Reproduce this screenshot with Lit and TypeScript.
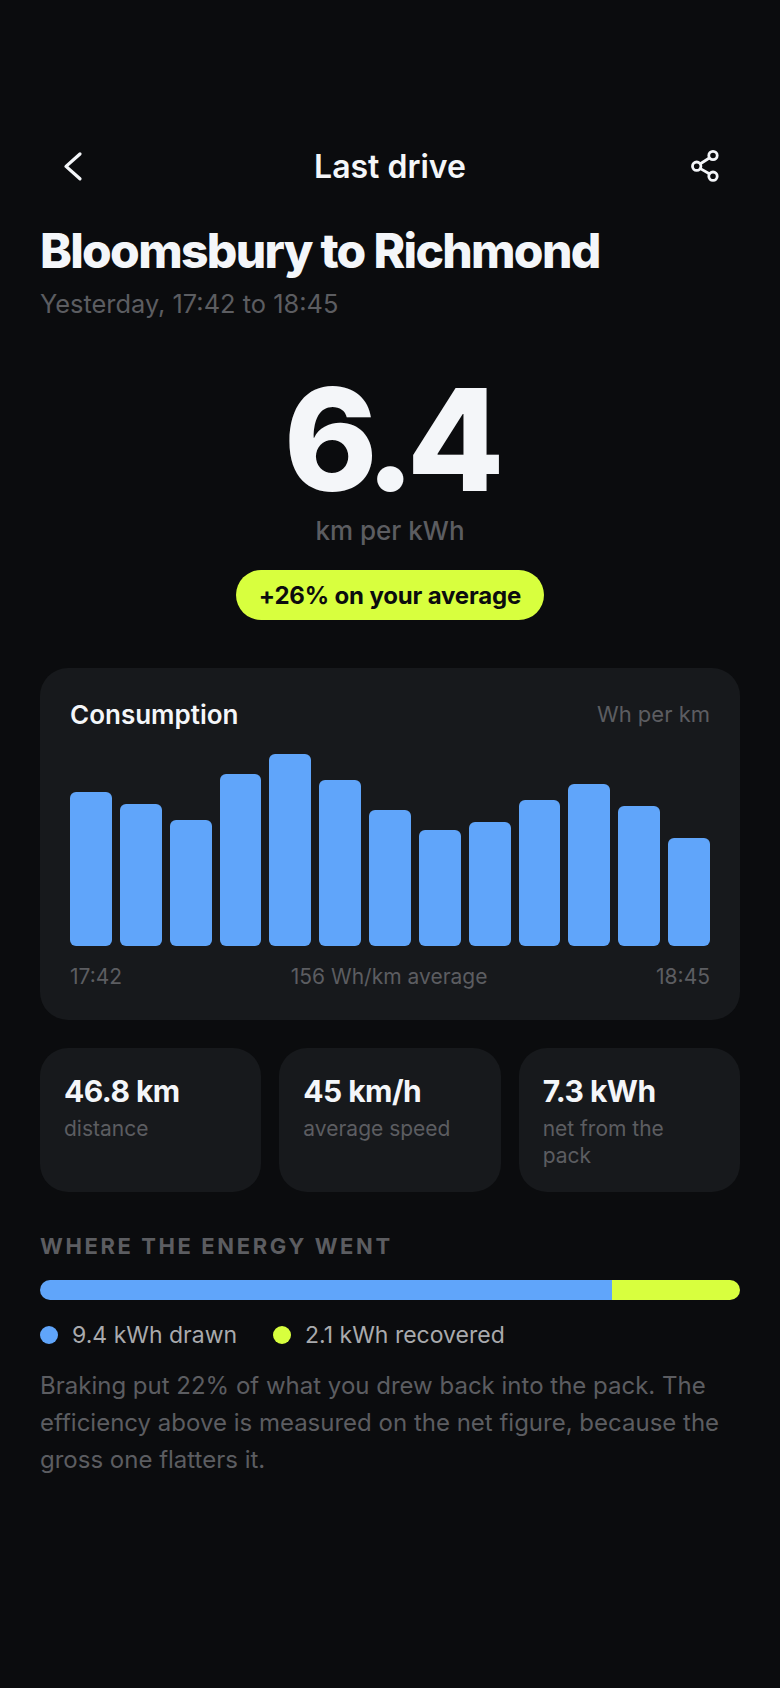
import { LitElement, html, css } from 'lit';
import { customElement } from 'lit/decorators.js';

const BARS = [154, 142, 126, 172, 192, 166, 136, 116, 124, 146, 162, 140, 108];

const STATS = [
  { value: '46.8 km', label: 'distance' },
  { value: '45 km/h', label: 'average speed' },
  { value: '7.3 kWh', label: 'net from the pack' },
];

@customElement('app-root')
export class AppRoot extends LitElement {
  static styles = css`
    :host {
      display: block;
      width: 780px;
      height: 1688px;
      box-sizing: border-box;
      padding: 140px 40px 0;
      background: #0b0c0e;
      color: #f4f6f9;
      font-family: Inter, "Noto Sans", sans-serif;
    }

    .nav {
      display: flex;
      align-items: center;
      justify-content: space-between;
      height: 52px;
    }

    .nav-btn {
      display: flex;
      align-items: center;
      justify-content: center;
      width: 70px;
      height: 52px;
    }

    .nav-title {
      font-size: 32px;
      font-weight: 600;
    }

    h1 {
      margin: 30px 0 0;
      font-size: 48px;
      line-height: 58px;
      font-weight: 800;
      letter-spacing: -1.7px;
    }

    .when {
      margin-top: 7px;
      font-size: 25.4px;
      line-height: 34px;
      color: #5c5d61;
    }

    .hero {
      display: flex;
      flex-direction: column;
      align-items: center;
      margin-top: 43px;
    }

    .hero-value {
      font-size: 142px;
      line-height: 150px;
      font-weight: 800;
      letter-spacing: -8.5px;
    }

    .hero-unit {
      font-size: 26px;
      line-height: 34px;
      font-weight: 500;
      color: #5c5d61;
    }

    .pill {
      margin-top: 22px;
      padding: 0 23px;
      height: 50px;
      display: flex;
      align-items: center;
      border-radius: 25px;
      background: #d8ff3e;
      color: #0b0c0e;
      font-size: 24px;
      font-weight: 700;
      letter-spacing: -0.16px;
    }

    .card {
      background: #17191c;
      border-radius: 28px;
    }

    .chart {
      margin-top: 48px;
      padding: 30px;
    }

    .chart-head {
      display: flex;
      align-items: center;
      justify-content: space-between;
      height: 32px;
    }

    .chart-title {
      font-size: 26px;
      font-weight: 600;
    }

    .muted {
      font-size: 22px;
      color: #5c5d61;
    }

    .bars {
      display: flex;
      align-items: flex-end;
      gap: 8px;
      height: 192px;
      margin-top: 24px;
    }

    .bar {
      flex: 1;
      border-radius: 6px;
      background: #60a5fa;
    }

    .chart-foot {
      display: flex;
      justify-content: space-between;
      margin-top: 18px;
      font-size: 21px;
      line-height: 26px;
      color: #5c5d61;
    }

    .stats {
      display: grid;
      grid-template-columns: repeat(3, 1fr);
      gap: 18px;
      margin-top: 28px;
    }

    .stat {
      padding: 24px 24px 20px;
      min-height: 144px;
      box-sizing: border-box;
    }

    .stat-value {
      font-size: 30px;
      line-height: 38px;
      font-weight: 700;
      letter-spacing: -0.55px;
    }

    .stat-label {
      margin-top: 5px;
      font-size: 21px;
      line-height: 27px;
      color: #5c5d61;
    }

    .section-label {
      margin-top: 40px;
      font-size: 22px;
      line-height: 28px;
      font-weight: 700;
      letter-spacing: 2.6px;
      color: #5c5d61;
    }

    .split {
      display: flex;
      height: 20px;
      margin-top: 20px;
      border-radius: 10px;
      overflow: hidden;
    }

    .legend {
      display: flex;
      align-items: center;
      gap: 36px;
      margin-top: 20px;
      font-size: 23px;
      line-height: 30px;
      color: #a9aaad;
    }

    .legend-item {
      display: flex;
      align-items: center;
      gap: 14px;
    }

    .dot {
      width: 18px;
      height: 18px;
      border-radius: 50%;
    }

    .blue {
      background: #60a5fa;
    }

    .lime {
      background: #d8ff3e;
    }

    .note {
      margin: 17px 0 0;
      font-size: 24px;
      line-height: 37.2px;
      color: #5c5d61;
    }
  `;

  render() {
    return html`
      <div class="nav">
        <div class="nav-btn">
          <svg width="44" height="44" viewBox="0 0 24 24" fill="none" stroke="#f4f6f9" stroke-width="1.8" stroke-linecap="round" stroke-linejoin="round">
            <path d="M14.7 5.4L7.1 12.2l7.6 6.8" />
          </svg>
        </div>
        <div class="nav-title">Last drive</div>
        <div class="nav-btn">
          <svg width="34" height="34" viewBox="0 0 34 34" fill="none" stroke="#f4f6f9" stroke-width="2.8" stroke-linecap="round" stroke-linejoin="round">
            <circle cx="25" cy="6.5" r="4.2" />
            <circle cx="8.7" cy="17.2" r="4.2" />
            <circle cx="25" cy="27.2" r="4.2" />
            <path d="M12.4 14.7l8.9-5.7M12.4 19.6l8.9 5.2" />
          </svg>
        </div>
      </div>

      <h1>Bloomsbury to Richmond</h1>
      <div class="when">Yesterday, 17:42 to 18:45</div>

      <div class="hero">
        <div class="hero-value">6.4</div>
        <div class="hero-unit">km per kWh</div>
        <div class="pill">+26% on your average</div>
      </div>

      <div class="card chart">
        <div class="chart-head">
          <div class="chart-title">Consumption</div>
          <div class="muted">Wh per km</div>
        </div>
        <div class="bars">
          ${BARS.map((h) => html`<div class="bar" style="height: ${h}px"></div>`)}
        </div>
        <div class="chart-foot">
          <span>17:42</span>
          <span>156 Wh/km average</span>
          <span>18:45</span>
        </div>
      </div>

      <div class="stats">
        ${STATS.map(
          (s) => html`
            <div class="card stat">
              <div class="stat-value">${s.value}</div>
              <div class="stat-label">${s.label}</div>
            </div>
          `
        )}
      </div>

      <div class="section-label">WHERE THE ENERGY WENT</div>
      <div class="split">
        <div class="blue" style="flex: 9.4"></div>
        <div class="lime" style="flex: 2.1"></div>
      </div>
      <div class="legend">
        <div class="legend-item"><span class="dot blue"></span>9.4 kWh drawn</div>
        <div class="legend-item"><span class="dot lime"></span>2.1 kWh recovered</div>
      </div>
      <p class="note">
        Braking put 22% of what you drew back into the pack. The efficiency above is measured on the net figure, because the gross one flatters it.
      </p>
    `;
  }
}
